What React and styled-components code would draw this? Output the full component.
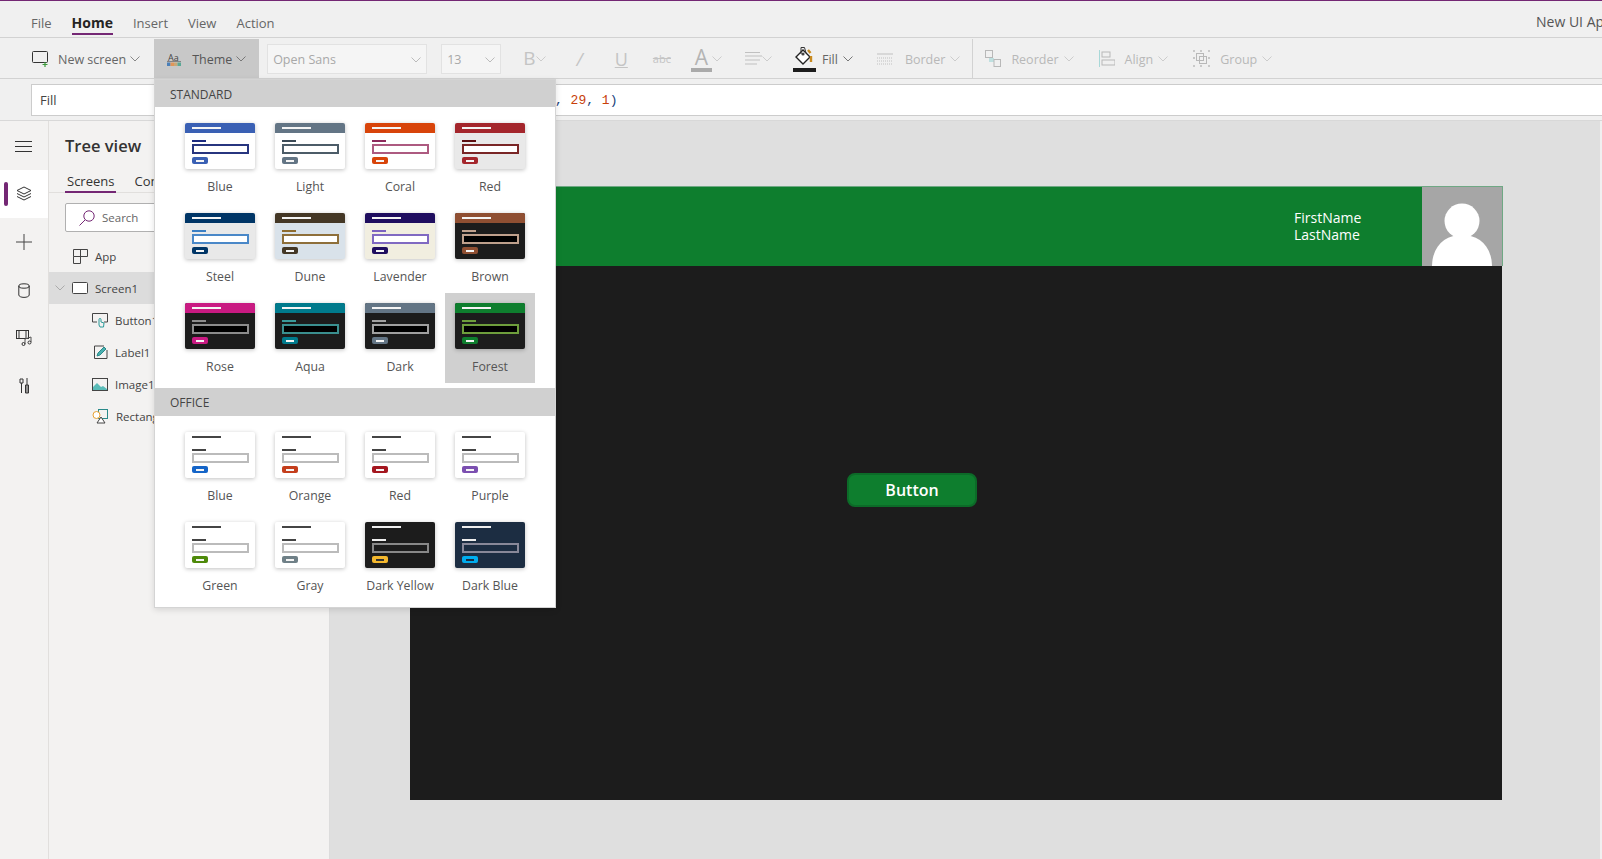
import React from "react";
import styled, { createGlobalStyle } from "styled-components";

const Global = createGlobalStyle`
  html, body { margin: 0; padding: 0; background: #f0f0f0; }
  body { font-family: "Open Sans", "Noto Sans", sans-serif; font-size: 13px; color: #333; }
  * { box-sizing: border-box; }
`;

const Page = styled.div`
  width: 1602px; height: 859px; overflow: hidden; position: relative;
  display: flex; flex-direction: column; background: #f0f0f0;
  border-top: 1px solid #742774;
`;

/* Menu bar */
const MenuBar = styled.div`
  height: 37px; display: flex; align-items: flex-start; padding: 0 0 0 31px;
  border-bottom: 1px solid #d2d2d2; position: relative; flex: none;
`;
const MenuItem = styled.div`
  height: 34px; padding-top: 13px; font-size: ${p => (p.$active ? 14 : 13)}px; line-height: 18px; margin-right: 20px;
  color: ${p => (p.$active ? "#252423" : "#666")}; font-weight: ${p => (p.$active ? 700 : 400)};
  border-bottom: ${p => (p.$active ? "2px solid #742774" : "none")};
`;
const AppName = styled.div`
  margin-left: auto; width: 66px; white-space: nowrap; overflow: hidden;
  font-size: 14px; line-height: 18px; margin-top: 12px; color: #555;
`;

/* Toolbar */
const Toolbar = styled.div`
  height: 41px; display: flex; align-items: center; padding: 1px 0 0 32px; flex: none;
  border-bottom: 1px solid #d2d2d2;
`;
const ToolItem = styled.div`
  display: flex; align-items: center; flex: none; height: 100%;
  margin-left: ${p => p.$ml || 0}px; font-size: 12.5px;
  color: ${p => p.$color || "#b8b8b8"};
`;
const ToolText = styled.span`
  margin: 0 ${p => p.$r ?? 5}px 0 ${p => p.$l ?? 10}px; padding-top: 2px;
`;
const ThemeButton = styled(ToolItem)`
  width: 105px; height: 39px; background: #c8c8c8; padding-left: 13px; color: #555;
`;
const Select = styled.div`
  width: ${p => p.$w}px; height: 30px; margin-left: ${p => p.$ml}px; flex: none;
  background: #f5f5f5; border: 1px solid #e2e2e2; display: flex; align-items: center;
  justify-content: space-between; padding: 2px 5px 0; color: #a8a8a8; font-size: 12.5px;
`;
const Separator = styled.div`
  width: 1px; height: 100%; background: #d2d2d2; margin-left: ${p => p.$ml}px; flex: none;
`;
const BigLetter = styled.span`
  font-size: ${p => p.$size || 18}px; line-height: 1; color: #c4c4c4;
  font-style: ${p => (p.$italic ? "italic" : "normal")};
  text-decoration: ${p => p.$deco || "none"};
  margin-right: ${p => p.$mr || 0}px;
`;

/* Formula bar */
const FormulaRow = styled.div`
  height: 42px; display: flex; padding: 5px 0 5px 31px; flex: none; border-bottom: 1px solid #d8d8d8;
`;
const PropertyBox = styled.div`
  width: 130px; height: 32px; background: #fff; border: 1px solid #ccc; border-right: none;
  padding-left: 8px; line-height: 31px; font-size: 13px; color: #444;
`;
const FormulaBox = styled.div`
  flex: 1; height: 32px; background: #fff; border-top: 1px solid #ccc; border-bottom: 1px solid #ccc;
  padding-left: 394px; font-family: "Liberation Mono", monospace; font-size: 13px; line-height: 31px; color: #333;
`;
const Num = styled.span` color: #c8400a; `;
const Punct = styled.span` color: #1a3f7a; `;

/* Workspace */
const Workspace = styled.div` flex: 1; display: flex; min-height: 0; `;
const Rail = styled.div`
  width: 49px; background: #f3f2f1; border-right: 1px solid #e1dfdd; display: flex; flex-direction: column;
  padding-top: 1px; flex: none;
`;
const RailItem = styled.div`
  height: 48px; display: flex; align-items: center; justify-content: center; position: relative;
  background: ${p => (p.$active ? "#fff" : "transparent")};
  padding-top: ${p => p.$pt || 0}px;
`;
const RailMark = styled.div`
  position: absolute; left: 4px; top: 12px; width: 4px; height: 24px; border-radius: 2px; background: #742774;
`;
const Panel = styled.div`
  width: 281px; background: #f3f2f1; border-right: 1px solid #dcdcdc; flex: none; display: flex; flex-direction: column;
`;
const PanelTitle = styled.div`
  font-size: 16.5px; font-weight: 600; color: #333; line-height: 24px; padding: 13px 0 0 16px;
`;
const Tabs = styled.div`
  display: flex; gap: 16px; padding: 9px 0 0 16px; height: 35px; border-bottom: 1px solid #e1dfdd;
`;
const Tab = styled.div`
  height: 26px; padding: 4px 2px 0; font-size: 13px; line-height: 20px; color: #333; white-space: nowrap;
  border-bottom: ${p => (p.$active ? "2px solid #742774" : "none")};
`;
const SearchBox = styled.div`
  margin: 10px 18px 0 16px; height: 29px; background: #fff; border: 1px solid #b0b0b0; border-radius: 2px;
  display: flex; align-items: center; padding-left: 13px; gap: 7px; font-size: 11.5px; color: #666;
`;
const TreeRow = styled.div`
  height: ${p => p.$h || 32}px; display: flex; align-items: center; gap: 7px; font-size: 11.5px; color: #444;
  padding-left: ${p => p.$indent}px; padding-top: ${p => p.$pt || 0}px; white-space: nowrap;
  background: ${p => (p.$selected ? "#dcdcdc" : "transparent")};
`;
const Canvas = styled.div`
  flex: 1; background: #dfdfdf; padding: 65px 0 0 80px; border-right: 2px solid #f0f0f0;
`;
const Screen = styled.div` width: 1093px; display: flex; flex-direction: column; `;
const ScreenHeader = styled.div`
  height: 80px; background: #0e7e2e; display: flex; justify-content: flex-end;
  border-top: 1px solid #6fa884; border-right: 1px solid #6fa884;
`;
const UserName = styled.div`
  color: #fff; font-size: 14px; line-height: 17px; padding-top: 22px; width: 128px;
`;
const Avatar = styled.div` width: 80px; background: #a6a6a6; overflow: hidden; `;
const ScreenBody = styled.div`
  width: 1092px; height: 534px; background: #1c1c1c; padding: 207px 0 0 437px;
`;
const GreenButton = styled.div`
  width: 130px; height: 34px; border-radius: 8px; background: #0e7e2e; border: 2px solid #0c6b28;
  color: #fff; font-size: 16px; font-weight: 600; display: flex; align-items: center; justify-content: center;
`;

/* Theme dropdown */
const Dropdown = styled.div`
  position: absolute; left: 154px; top: 78px; width: 402px; height: 529px; background: #fff;
  border: 1px solid #d4d4d4; box-shadow: 0 2px 6px rgba(0,0,0,.12); display: flex; flex-direction: column;
`;
const SectionHead = styled.div`
  height: ${p => p.$h}px; background: #d0d0d0; font-size: 12px; line-height: 29px; padding-left: 15px; color: #444; flex: none;
`;
const Grid = styled.div`
  display: grid; grid-template-columns: repeat(4, 90px); grid-auto-rows: 90px;
  padding: 6px 0 5px 20px;
`;
const Cell = styled.div`
  padding: 10px 10px 0; display: flex; flex-direction: column; align-items: center;
  background: ${p => (p.$hover ? "#d0d0d0" : "transparent")};
`;
const CellLabel = styled.div`
  font-size: 12.3px; line-height: 17px; margin-top: 9px; color: #555; white-space: nowrap;
`;
const Thumb = styled.div`
  width: 70px; height: 46px; flex: none; border-radius: 2px; background: ${p => p.$bg};
  box-shadow: 0 1px 4px rgba(0,0,0,.25); overflow: hidden;
`;
const ThumbHead = styled.div`
  height: 10px; background: ${p => p.$c}; padding: 4px 0 0 7px;
`;
const ThumbTitle = styled.div` width: 29px; height: 2px; background: ${p => p.$c}; `;
const ThumbBody = styled.div` padding: 7px 0 0 7px; `;
const ThumbLabel = styled.div` width: 14px; height: 2px; background: ${p => p.$c}; `;
const ThumbInput = styled.div`
  width: 57px; height: 10px; margin: 2px 0 3px -0.5px; background: ${p => p.$fill}; border: 2px solid ${p => p.$c};
`;
const ThumbButton = styled.div`
  width: 16px; height: 7px; background: ${p => p.$c}; border-radius: 2px; display: flex; align-items: center; justify-content: center;
`;
const ThumbDash = styled.div` width: 8px; height: 2px; background: ${p => p.$c}; `;

const std = (name, head, line, input, bg = "#fff", fill = "#fff", btn) => ({ name, head, line, input, bg, fill, btn: btn || head, title: "#f4f4f4", dash: "#f4f4f4" });
const D = "#1c1c1c";
const standard = [
  std("Blue", "#3a60b4", "#1c2a80", "#27357f"),
  std("Light", "#637585", "#3b4a56", "#4c5c68"),
  std("Coral", "#d8440a", "#8d2a5c", "#ad5a80"),
  std("Red", "#a4262c", "#5c0f12", "#7a2626", "#e9e9e9"),
  std("Steel", "#003566", "#3a7fc4", "#4a88c8", "#e9e9e9"),
  std("Dune", "#443725", "#8e6c2f", "#8e6f3a", "#d9e2ea"),
  std("Lavender", "#1f0d5f", "#7b62c0", "#8069c2", "#f1eee0"),
  std("Brown", "#8f4f32", "#bfa08c", "#bfa08c", D, "#000"),
  std("Rose", "#c91a82", "#8c8c8c", "#8c8c8c", D, "#000"),
  std("Aqua", "#007a8c", "#3a9a9a", "#3a8f8f", D, "#000"),
  std("Dark", "#637585", "#a0a0a0", "#a0a0a0", D, "#000"),
  std("Forest", "#0e7e2e", "#6e9e3c", "#6e9e3c", D, "#000"),
];
const off = (name, btn, extra = {}) => ({ name, head: "transparent", line: "#444", input: "#bbb", bg: "#fff", fill: "#fff", btn, title: "#444", dash: "#f4f4f4", ...extra });
const office = [
  off("Blue", "#1565c8"), off("Orange", "#c43e1c"), off("Red", "#a4161f"), off("Purple", "#7b4fb0"),
  off("Green", "#4e8a0a"), off("Gray", "#6f8087"),
  off("Dark Yellow", "#f4b82e", { bg: D, fill: D, line: "#eee", title: "#eee", input: "#888", dash: "#333" }),
  off("Dark Blue", "#00adef", { bg: "#1c2d42", fill: "#1c2d42", line: "#eee", title: "#eee", input: "#889", dash: "#1c2d42" }),
];

function ThemeThumb({ t }) {
  return (
    <Thumb $bg={t.bg}>
      <ThumbHead $c={t.head}><ThumbTitle $c={t.title} /></ThumbHead>
      <ThumbBody>
        <ThumbLabel $c={t.line} />
        <ThumbInput $c={t.input} $fill={t.fill} />
        <ThumbButton $c={t.btn}><ThumbDash $c={t.dash} /></ThumbButton>
      </ThumbBody>
    </Thumb>
  );
}

const Chev = ({ c = "#888", w = 10 }) => (
  <svg width={w} height="6" viewBox="0 0 10 6" fill="none"><path d="M.5.5 5 5 9.5.5" stroke={c} strokeWidth="1" /></svg>
);

export default function App() {
  return (
    <Page>
      <Global />
      <MenuBar>
        <MenuItem>File</MenuItem>
        <MenuItem $active>Home</MenuItem>
        <MenuItem>Insert</MenuItem>
        <MenuItem>View</MenuItem>
        <MenuItem>Action</MenuItem>
        <AppName>New UI App</AppName>
      </MenuBar>

      <Toolbar>
        <ToolItem $color="#666">
          <svg width="17" height="17" viewBox="0 0 17 17" fill="none">
            <rect x=".5" y="1.5" width="15" height="11" rx="1" stroke="#333" />
            <path d="M13 12v5M10.5 14.5h5" stroke="#3a9a3a" strokeWidth="1.2" />
          </svg>
          <ToolText $l={9} $r={4}>New screen</ToolText>
          <Chev />
        </ToolItem>
        <ThemeButton $ml={14}>
          <svg width="15" height="14" viewBox="0 0 15 14">
            <text x="1" y="8.5" fontSize="9" fill="#444" fontFamily="Open Sans">Aa</text>
            <path d="M0 9.5h14" stroke="#666" strokeWidth=".7" />
            <rect x="0" y="10.5" width="3.5" height="3.5" fill="#4a7fb8" /><rect x="3.5" y="10.5" width="3.5" height="3.5" fill="#e0965a" /><rect x="7" y="10.5" width="3.5" height="3.5" fill="#c8a878" /><rect x="10.5" y="10.5" width="3.5" height="3.5" fill="#5aa896" />
          </svg>
          <ToolText $l={10} $r={4}>Theme</ToolText>
          <Chev c="#777" />
        </ThemeButton>
        <Select $w={160} $ml={8}><span>Open Sans</span><Chev c="#bbb" /></Select>
        <Select $w={60} $ml={14}><span>13</span><Chev c="#bbb" /></Select>
        <ToolItem $ml={22}><BigLetter $size={19} $mr={1}>B</BigLetter><Chev c="#ccc" /></ToolItem>
        <ToolItem $ml={30}><BigLetter $size={18} $italic>/</BigLetter></ToolItem>
        <ToolItem $ml={32}><BigLetter $size={18} $deco="underline">U</BigLetter></ToolItem>
        <ToolItem $ml={25}><BigLetter $size={11} $deco="line-through">abc</BigLetter></ToolItem>
        <ToolItem $ml={20}>
          <svg width="21" height="26" viewBox="0 0 21 26">
            <text x="10.5" y="19" textAnchor="middle" fontSize="21" fill="#b4b4b4" fontFamily="Open Sans">A</text>
            <rect x="0" y="22" width="21" height="4" fill="#aaa" />
          </svg>
          <Chev c="#ccc" />
        </ToolItem>
        <ToolItem $ml={23}>
          <svg width="17" height="15" viewBox="0 0 17 15" stroke="#c0c0c0">
            <path d="M0 1.5h15M0 5h17M0 9h15M0 13h12" />
          </svg>
          <Chev c="#ccc" />
        </ToolItem>
        <ToolItem $ml={21} $color="#666">
          <svg width="23" height="26" viewBox="0 0 23 26" fill="none">
            <path d="M3 11l7-7 7 7-7 7z" fill="#fff" stroke="#222" strokeWidth="1.4" />
            <circle cx="10" cy="8" r="1.6" fill="#444" />
            <path d="M8 8V1.5h3.5L13 7" stroke="#333" />
            <path d="M15 4l2.5 3M18 10v6" stroke="#c88a20" strokeWidth="2.4" />
            <rect x="0" y="22" width="23" height="4" fill="#1c1c1c" />
          </svg>
          <ToolText $l={6} $r={5}>Fill</ToolText>
          <Chev c="#777" />
        </ToolItem>
        <ToolItem $ml={24}>
          <svg width="16" height="12" viewBox="0 0 16 12" stroke="#c0c0c0">
            <path d="M0 1h16" /><path d="M0 5h16M0 8h16M0 11h16" strokeDasharray="1 1" />
          </svg>
          <ToolText $l={12} $r={5}>Border</ToolText>
          <Chev c="#ccc" />
        </ToolItem>
        <Separator $ml={12} />
        <ToolItem $ml={12}>
          <svg width="16" height="17" viewBox="0 0 16 17" fill="none" stroke="#b8b8b8">
            <rect x=".5" y=".5" width="7" height="7" /><rect x="4" y="8" width="5" height="4" fill="#bfe0e0" stroke="none" /><rect x="9" y="9.5" width="6.5" height="7" />
          </svg>
          <ToolText $l={10} $r={5}>Reorder</ToolText>
          <Chev c="#ccc" />
        </ToolItem>
        <ToolItem $ml={25}>
          <svg width="16" height="17" viewBox="0 0 16 17" fill="none" stroke="#b8b8b8">
            <path d="M.5 0v17" stroke="#a8d8d8" /><rect x="3" y="2" width="8" height="5" /><rect x="3" y="10" width="13" height="5" />
          </svg>
          <ToolText $l={10} $r={5}>Align</ToolText>
          <Chev c="#ccc" />
        </ToolItem>
        <ToolItem $ml={25}>
          <svg width="17" height="17" viewBox="0 0 17 17" fill="none" stroke="#b8b8b8">
            <path d="M1 0v2M16 0v2M1 15v2M16 15v2M8 0v2M8 15v2M0 8h2M15 8h2" strokeWidth="1.4" />
            <rect x="3.5" y="3.5" width="7" height="7" /><rect x="6.5" y="6.5" width="7" height="7" />
          </svg>
          <ToolText $l={10} $r={5}>Group</ToolText>
          <Chev c="#ccc" />
        </ToolItem>
      </Toolbar>

      <FormulaRow>
        <PropertyBox>Fill</PropertyBox>
        <FormulaBox>
          <Punct>, </Punct><Num>29</Num><Punct>, </Punct><Num>1</Num><Punct>)</Punct>
        </FormulaBox>
      </FormulaRow>

      <Workspace>
        <Rail>
          <RailItem $pt={2}>
            <svg width="18" height="12" viewBox="0 0 18 12" stroke="#333"><path d="M0 .5h17M0 5.5h17M0 10.5h17" /></svg>
          </RailItem>
          <RailItem $active>
            <RailMark />
            <svg width="16" height="16" viewBox="0 0 16 16" fill="none" stroke="#333">
              <path d="M8 1 1 4.5 8 8l7-3.5z" /><path d="M1 7.5 8 11l7-3.5" /><path d="M1 10.5 8 14l7-3.5" />
            </svg>
          </RailItem>
          <RailItem>
            <svg width="16" height="16" viewBox="0 0 16 16" stroke="#444"><path d="M8 0v16M0 8h16" /></svg>
          </RailItem>
          <RailItem>
            <svg width="12" height="15" viewBox="0 0 12 15" fill="none" stroke="#333">
              <ellipse cx="6" cy="3" rx="5.2" ry="2.2" /><path d="M.8 3v9c0 1.3 2.3 2.4 5.2 2.4s5.2-1.1 5.2-2.4V3" />
            </svg>
          </RailItem>
          <RailItem>
            <svg width="17" height="16" viewBox="0 0 17 16" fill="none" stroke="#333">
              <rect x=".5" y=".5" width="12" height="8" /><path d="M3 1v7M10 1v7" /><path d="M9 14V9l6-2v5" stroke="#555" /><circle cx="7.5" cy="14" r="1.5" /><circle cx="13.5" cy="12.5" r="1.5" />
            </svg>
          </RailItem>
          <RailItem>
            <svg width="11" height="16" viewBox="0 0 11 16" fill="none" stroke="#333">
              <path d="M1 1h3v4H1zM2.5 5v10M8 0v15" /><path d="M6.5 7h3v8h-3z" />
            </svg>
          </RailItem>
        </Rail>
        <Panel>
          <PanelTitle>Tree view</PanelTitle>
          <Tabs>
            <Tab $active>Screens</Tab>
            <Tab>Components</Tab>
          </Tabs>
          <SearchBox>
            <svg width="16" height="16" viewBox="0 0 16 16" fill="none" stroke="#742774"><circle cx="10" cy="6" r="5.2" /><path d="M6.2 9.8.5 15.5" /></svg>
            <span>Search</span>
          </SearchBox>
          <TreeRow $indent={24} $h={40} $pt={8}>
            <svg width="15" height="15" viewBox="0 0 15 15" fill="none" stroke="#444"><path d="M.5.5h14v7H.5zM.5 7.5v7h7V.5" /></svg>
            <span>App</span>
          </TreeRow>
          <TreeRow $indent={6} $selected $h={32}>
            <Chev c="#aaa" />
            <svg width="16" height="12" viewBox="0 0 16 12" fill="#fff" stroke="#444"><rect x=".5" y=".5" width="15" height="11" rx="1" /></svg>
            <span>Screen1</span>
          </TreeRow>
          <TreeRow $indent={43}>
            <svg width="16" height="15" viewBox="0 0 16 15" fill="none" stroke="#444"><path d="M5 9H.5V.5h15V9H12" /><path d="M7 12V6.5a1 1 0 0 1 2 0V9l3 1-.5 4H8z" stroke="#2a9a9a" /></svg>
            <span>Button1</span>
          </TreeRow>
          <TreeRow $indent={45}>
            <svg width="14" height="14" viewBox="0 0 14 14" fill="none" stroke="#444"><path d="M10 1H.5v12.5H13V5" /><path d="M3 11l1-3 6-6 2 2-6 6z" fill="#4ab0b0" stroke="#2a8a8a" /></svg>
            <span>Label1</span>
          </TreeRow>
          <TreeRow $indent={43}>
            <svg width="16" height="13" viewBox="0 0 16 13" fill="none" stroke="#444"><rect x=".5" y=".5" width="15" height="12" /><path d="M1 12V9l4-4 4 4 2-1 4 3v1z" fill="#5abcb8" stroke="none" /></svg>
            <span>Image1</span>
          </TreeRow>
          <TreeRow $indent={43}>
            <svg width="17" height="15" viewBox="0 0 17 15" fill="none"><rect x="6.5" y=".5" width="9" height="9" stroke="#2a8a8a" /><path d="M5 14l4-6 4 6z" stroke="#444" fill="#fff" /><circle cx="4.5" cy="6" r="3.5" stroke="#e8a030" fill="#fff" /></svg>
            <span>Rectangle1</span>
          </TreeRow>
        </Panel>
        <Canvas>
          <Screen>
            <ScreenHeader>
              <UserName>FirstName<br />LastName</UserName>
              <Avatar>
                <svg width="80" height="80" viewBox="0 0 80 80">
                  <circle cx="40" cy="34" r="17.5" fill="#fff" />
                  <path d="M10 80c0-22 14-32 30-32s30 10 30 32z" fill="#fff" />
                </svg>
              </Avatar>
            </ScreenHeader>
            <ScreenBody>
              <GreenButton>Button</GreenButton>
            </ScreenBody>
          </Screen>
        </Canvas>
      </Workspace>

      <Dropdown>
        <SectionHead $h={27}>STANDARD</SectionHead>
        <Grid>
          {standard.map(t => (
            <Cell key={t.name} $hover={t.name === "Forest"}>
              <ThemeThumb t={t} />
              <CellLabel>{t.name}</CellLabel>
            </Cell>
          ))}
        </Grid>
        <SectionHead $h={28}>OFFICE</SectionHead>
        <Grid>
          {office.map(t => (
            <Cell key={t.name}>
              <ThemeThumb t={t} />
              <CellLabel>{t.name}</CellLabel>
            </Cell>
          ))}
        </Grid>
      </Dropdown>
    </Page>
  );
}
